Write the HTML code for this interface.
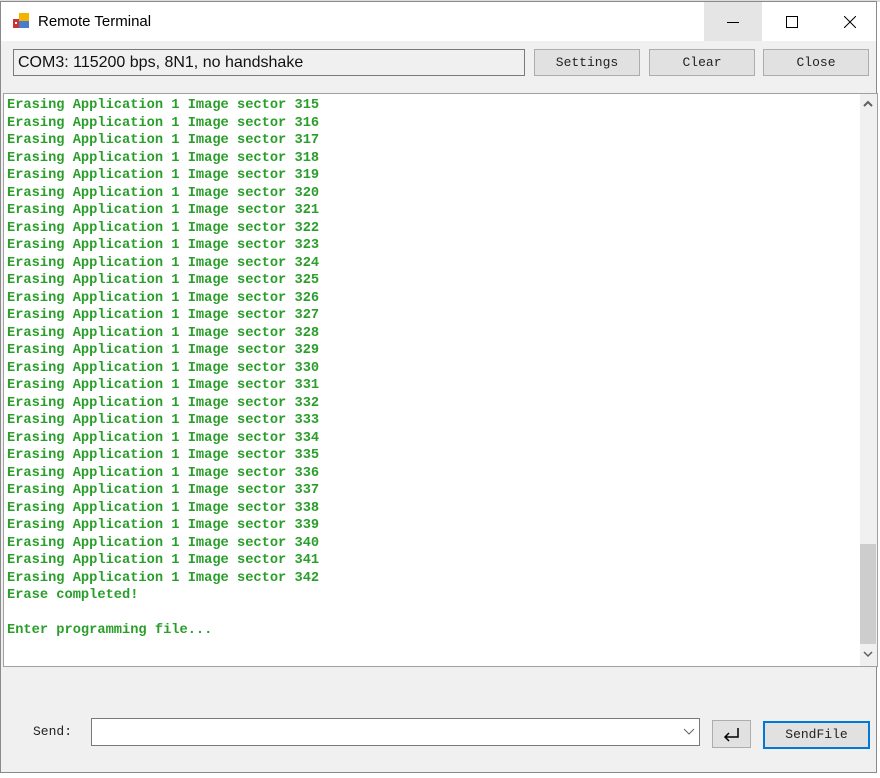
<!DOCTYPE html>
<html><head><style>
body{margin:0;width:880px;height:778px;background:#fff;position:relative;overflow:hidden;font-family:"Liberation Sans",sans-serif}
.win{position:absolute;left:0;top:1px;width:877px;height:772px;border:1px solid #8a8a8a;background:#f0f0f0;box-sizing:border-box}
.title{position:absolute;left:0;top:0;width:875px;height:39px;background:#fff}
.btn{position:absolute;height:27px;border:1px solid #adadad;background:#e1e1e1;box-sizing:border-box;font:13px "Liberation Mono",monospace;color:#222;text-align:center;line-height:25px}
.term{position:absolute;left:2px;top:91px;width:875px;height:574px;background:#fff;border:1px solid #a0a0a0;box-sizing:border-box}
.txt{position:absolute;left:3px;top:3px;font:bold 13.7px/17.52px "Liberation Mono",monospace;color:#2a9e2a;white-space:pre;margin:0}
</style></head><body>
<div style="position:absolute;left:0;top:0;width:880px;height:2px;background:#ddd"></div>
<div class="win">
<div class="title">
 <svg style="position:absolute;left:12px;top:10px" width="18" height="18"><rect x="0" y="7" width="6" height="9" fill="#c33"/><rect x="6" y="1" width="10" height="8" fill="#f2b400"/><rect x="6" y="9" width="10" height="7" fill="#4a7ccc"/><rect x="2" y="10" width="2" height="2" fill="#fff"/></svg>
 <div style="position:absolute;left:37px;top:11px;font-size:15px;color:#000">Remote Terminal</div>
 <div style="position:absolute;left:703px;top:0;width:58px;height:39px;background:#e5e5e5"></div>
 <div style="position:absolute;left:726px;top:20px;width:12px;height:1px;background:#000"></div>
 <div style="position:absolute;left:785px;top:14px;width:10px;height:10px;border:1px solid #000"></div>
 <svg style="position:absolute;left:843px;top:14px" width="12" height="12"><path d="M0 0L12 12M12 0L0 12" stroke="#000" stroke-width="1"/></svg>
</div>
<div style="position:absolute;left:12px;top:47px;width:512px;height:27px;border:1px solid #7a7a7a;background:#f0f0f0;box-sizing:border-box;font-size:16px;line-height:25px;padding-left:4px;color:#111">COM3: 115200 bps, 8N1, no handshake</div>
<div class="btn" style="left:533px;top:47px;width:106px">Settings</div>
<div class="btn" style="left:648px;top:47px;width:106px">Clear</div>
<div class="btn" style="left:762px;top:47px;width:106px">Close</div>
<div class="term">
<pre class="txt">Erasing Application 1 Image sector 315
Erasing Application 1 Image sector 316
Erasing Application 1 Image sector 317
Erasing Application 1 Image sector 318
Erasing Application 1 Image sector 319
Erasing Application 1 Image sector 320
Erasing Application 1 Image sector 321
Erasing Application 1 Image sector 322
Erasing Application 1 Image sector 323
Erasing Application 1 Image sector 324
Erasing Application 1 Image sector 325
Erasing Application 1 Image sector 326
Erasing Application 1 Image sector 327
Erasing Application 1 Image sector 328
Erasing Application 1 Image sector 329
Erasing Application 1 Image sector 330
Erasing Application 1 Image sector 331
Erasing Application 1 Image sector 332
Erasing Application 1 Image sector 333
Erasing Application 1 Image sector 334
Erasing Application 1 Image sector 335
Erasing Application 1 Image sector 336
Erasing Application 1 Image sector 337
Erasing Application 1 Image sector 338
Erasing Application 1 Image sector 339
Erasing Application 1 Image sector 340
Erasing Application 1 Image sector 341
Erasing Application 1 Image sector 342
Erase completed!

Enter programming file...</pre>
<div style="position:absolute;right:0;top:0;width:17px;height:572px;background:#f0f0f0"></div>
<div style="position:absolute;right:1px;top:450px;width:16px;height:100px;background:#cdcdcd"></div>
<svg style="position:absolute;right:3px;top:6px" width="12" height="8"><path d="M2 6L6 2L10 6" stroke="#606060" stroke-width="2" fill="none"/></svg>
<svg style="position:absolute;right:3px;top:556px" width="12" height="8"><path d="M2 2L6 6L10 2" stroke="#606060" stroke-width="1.5" fill="none"/></svg>
</div>
<div style="position:absolute;left:32px;top:722px;font:13px 'Liberation Mono',monospace;color:#222">Send:</div>
<div style="position:absolute;left:90px;top:716px;width:609px;height:28px;border:1px solid #7a7a7a;background:#fff;box-sizing:border-box"></div>
<svg style="position:absolute;left:682px;top:726px" width="12" height="8"><path d="M1 1L6 6L11 1" stroke="#666" fill="none"/></svg>
<div style="position:absolute;left:711px;top:718px;width:39px;height:28px;border:1px solid #adadad;background:#e1e1e1;box-sizing:border-box"></div>
<svg style="position:absolute;left:720px;top:724px" width="22" height="16"><path d="M17 2V11H4M8 7L4 11L8 15" stroke="#000" stroke-width="1.5" fill="none"/></svg>
<div class="btn" style="left:762px;top:719px;width:107px;height:28px;border:2px solid #0078d7;line-height:24px">SendFile</div>
</div>
</body></html>
